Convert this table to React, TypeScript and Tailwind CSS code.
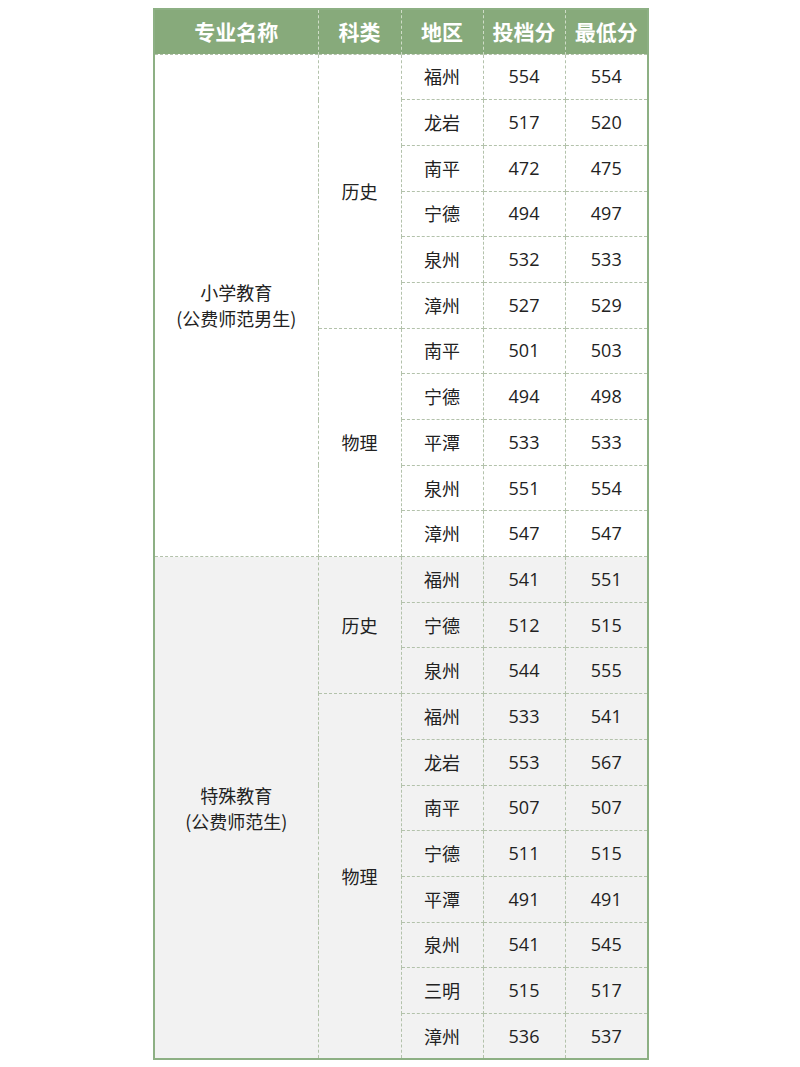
const groups = [
  {
    major: ['小学教育', '(公费师范男生)'],
    bg: 'bg-white',
    subs: [
      {
        cat: '历史',
        rows: [
          ['福州', '554', '554'],
          ['龙岩', '517', '520'],
          ['南平', '472', '475'],
          ['宁德', '494', '497'],
          ['泉州', '532', '533'],
          ['漳州', '527', '529'],
        ],
      },
      {
        cat: '物理',
        rows: [
          ['南平', '501', '503'],
          ['宁德', '494', '498'],
          ['平潭', '533', '533'],
          ['泉州', '551', '554'],
          ['漳州', '547', '547'],
        ],
      },
    ],
  },
  {
    major: ['特殊教育', '(公费师范生)'],
    bg: 'bg-[#f2f2f2]',
    subs: [
      {
        cat: '历史',
        rows: [
          ['福州', '541', '551'],
          ['宁德', '512', '515'],
          ['泉州', '544', '555'],
        ],
      },
      {
        cat: '物理',
        rows: [
          ['福州', '533', '541'],
          ['龙岩', '553', '567'],
          ['南平', '507', '507'],
          ['宁德', '511', '515'],
          ['平潭', '491', '491'],
          ['泉州', '541', '545'],
          ['三明', '515', '517'],
          ['漳州', '536', '537'],
        ],
      },
    ],
  },
];

const cell = 'border border-dashed border-[#b3c2ab] text-center align-middle';

export default function App() {
  return (
    <div className="w-[800px] h-[1067px] bg-white pt-[8px] font-['Noto_Sans_CJK_SC','Noto_Sans',sans-serif] text-[#222]">
      <table className="ml-[153px] w-[494px] border-collapse border-2 border-solid border-[#8db084] table-fixed text-[18px]">
        <colgroup>
          <col className="w-[164px]" />
          <col className="w-[83px]" />
          <col className="w-[82px]" />
          <col className="w-[82px]" />
          <col className="w-[83px]" />
        </colgroup>
        <thead>
          <tr className="h-[45px] bg-[#87aa7b] text-white text-[21px] font-bold">
            {['专业名称', '科类', '地区', '投档分', '最低分'].map((h) => (
              <th key={h} className="border-x border-dashed border-[#cfdcc8] font-bold">
                {h}
              </th>
            ))}
          </tr>
        </thead>
        <tbody>
          {groups.map((g) => {
            const total = g.subs.reduce((n, s) => n + s.rows.length, 0);
            return g.subs.map((s, si) =>
              s.rows.map((r, ri) => (
                <tr key={g.major[0] + s.cat + r[0]} className={`h-[45.7px] ${g.bg}`}>
                  {si === 0 && ri === 0 && (
                    <td rowSpan={total} className={`${cell} leading-[26px]`}>
                      <div>{g.major[0]}</div>
                      <div>{g.major[1]}</div>
                    </td>
                  )}
                  {ri === 0 && (
                    <td rowSpan={s.rows.length} className={cell}>
                      {s.cat}
                    </td>
                  )}
                  {r.map((v, i) => (
                    <td key={i} className={`${cell} ${i > 0 ? "font-['Open_Sans','Noto_Sans',sans-serif]" : ''}`}>
                      {v}
                    </td>
                  ))}
                </tr>
              ))
            );
          })}
        </tbody>
      </table>
    </div>
  );
}
